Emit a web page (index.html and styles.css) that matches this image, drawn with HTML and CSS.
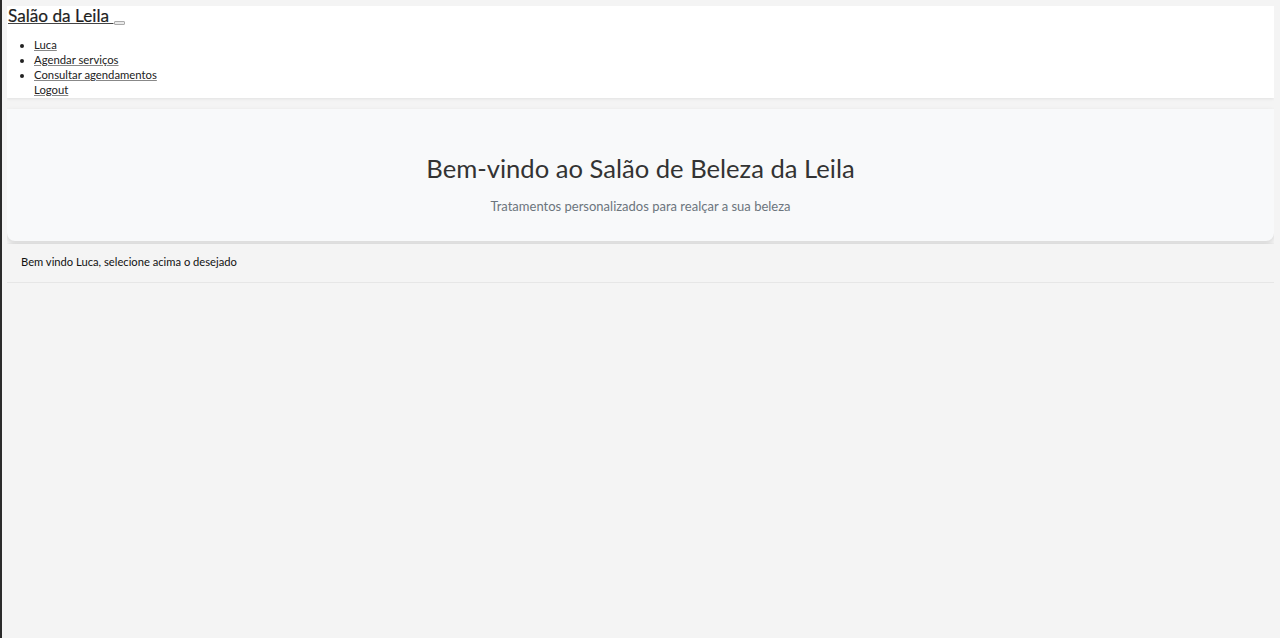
FILE: index.html
```html
<!DOCTYPE html>
<html lang="pt">
<head>
<meta charset="utf-8">
<title>Salão da Leila</title>
<link rel="stylesheet" href="styles.css">
</head>
<body>
<nav class="navbar">
  <div class="brand-row">
    <a class="brand" href="#">Salão da Leila </a><button class="toggler" type="button"></button>
  </div>
  <ul class="nav-list">
    <li><a href="#">Luca</a></li>
    <li><a href="#">Agendar serviços</a></li>
    <li><a href="#">Consultar agendamentos</a></li>
    <li class="no-bullet"><a href="#">Logout</a></li>
  </ul>
</nav>
<header class="hero">
  <h1 class="hero-title">Bem-vindo ao Salão de Beleza da Leila</h1>
  <p class="hero-sub">Tratamentos personalizados para realçar a sua beleza</p>
</header>
<section class="welcome">
  <p>Bem vindo Luca, selecione acima o desejado</p>
</section>
</body>
</html>
```
FILE: styles.css
```css
html {
  border-left: 2px solid #2b2b2b;
  background: #f4f4f4;
  min-height: 100%;
}
body {
  margin: 6px 6px 0 5px;
  font-family: Lato, "Noto Sans", sans-serif;
  background: #f4f4f4;
  color: #222;
}
.navbar {
  background: #fff;
  box-shadow: 0 1px 3px rgba(0,0,0,0.08);
  height: 92px;
  overflow: hidden;
}
.brand-row {
  height: 20px;
  display: flex;
  align-items: flex-end;
}
.brand {
  font-size: 17.2px;
  color: #1e1e1e;
  text-decoration: underline;
  text-decoration-color: #444;
  line-height: 20px;
  padding-left: 1px;
  white-space: pre;
  -webkit-text-stroke: 0.2px #1e1e1e;
}
.toggler {
  width: 11px;
  height: 4px;
  padding: 0;
  margin: 0 0 1px 1px;
  border: 1px solid #aaa;
  background: #e9e9e9;
  border-radius: 1px;
}
.nav-list {
  margin: 11px 0 0 0;
  padding-left: 27px;
  font-size: 11.3px;
  line-height: 15px;
}
.nav-list a {
  color: #222;
  text-decoration: underline;
  text-decoration-color: #888;
}
.no-bullet {
  list-style: none;
}
.hero {
  margin-top: 11px;
  background: #f8f9fa;
  border-radius: 0 0 8px 8px;
  box-shadow: 0 2px 5px rgba(0,0,0,0.12);
  height: 132px;
  text-align: center;
  overflow: hidden;
}
.hero-title {
  margin: 43px 0 0 0;
  font-weight: 400;
  font-size: 25.6px;
  line-height: 32px;
  color: #333;
}
.hero-sub {
  margin: 14px 0 0 0;
  font-size: 13px;
  line-height: 16px;
  color: #6c757d;
}
.welcome {
  margin-top: 3px;
  background: #f4f4f4;
  box-shadow: 0 2px 5px rgba(0,0,0,0.14), 1px 0 2px rgba(0,0,0,0.06);
  border-bottom: 1px solid #e6e6e6;
  height: 38px;
  display: flex;
  align-items: center;
  padding-left: 14px;
}
.welcome p {
  margin: 0 0 3px 0;
  font-size: 11.2px;
  color: #111;
}
```
